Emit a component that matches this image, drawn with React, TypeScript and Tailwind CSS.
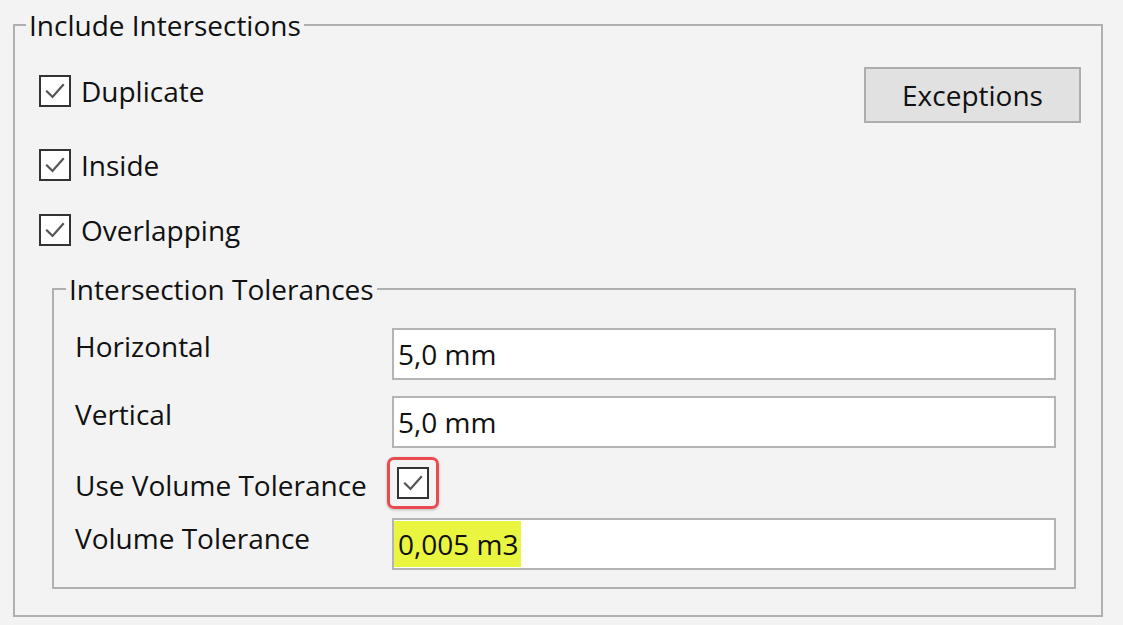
import React from 'react';

const font = { fontFamily: '"Open Sans", "Noto Sans", sans-serif' };

function CheckBox() {
  return (
    <span className="flex h-[32px] w-[32px] shrink-0 items-center justify-center border-2 border-[#333333] bg-white">
      <svg width="22" height="22" viewBox="0 0 22 22" fill="none">
        <path d="M3 11.5 L8.5 17 L19 5" stroke="#555555" strokeWidth="2.2" strokeLinecap="square" />
      </svg>
    </span>
  );
}

function CheckItem({ label, className }: { label: string; className?: string }) {
  return (
    <label className={'flex items-center gap-[10px] ' + (className ?? '')}>
      <CheckBox />
      <span className="leading-[34px]">{label}</span>
    </label>
  );
}

function TextBox({ value, highlight }: { value: string; highlight?: boolean }) {
  return (
    <div className="flex h-[52px] w-[664px] items-stretch border-2 border-[#b4b4b4] bg-white">
      <span
        className={
          'flex items-center pl-[4px] pr-[2px] ' + (highlight ? 'my-[1px] bg-[#eaf540]' : '')
        }
      >
        {value}
      </span>
    </div>
  );
}

export default function App() {
  return (
    <div
      className="h-[625px] w-[1123px] overflow-hidden bg-[#f3f3f3] pl-[13px] pt-[8px] text-[28px] text-[#111111]"
      style={font}
    >
      <fieldset className="h-[609px] w-[1090px] border-2 border-[#b0b0b0]">
        <legend className="ml-[11px] px-[3px] leading-[34px]">Include Intersections</legend>

        <div className="flex items-start justify-between pl-[24px] pr-[20px] pt-[25px]">
          <CheckItem label="Duplicate" className="mt-[7px]" />
          <button className="h-[56px] w-[217px] border-2 border-[#adadad] bg-[#e1e1e1] leading-[34px]">
            Exceptions
          </button>
        </div>
        <div className="pl-[24px]">
          <CheckItem label="Inside" className="mt-[25px]" />
          <CheckItem label="Overlapping" className="mt-[31px]" />
        </div>

        <fieldset className="ml-[37px] mt-[25px] h-[317px] w-[1024px] border-2 border-[#b0b0b0]">
          <legend className="ml-[12px] px-[3px] leading-[34px]">Intersection Tolerances</legend>

          <div className="grid grid-cols-[317px_664px] pl-[21px] pt-[22px]">
            <span className="pt-[1px] leading-[34px]">Horizontal</span>
            <TextBox value="5,0 mm" />

            <span className="mt-[16px] pt-[1px] leading-[34px]">Vertical</span>
            <div className="mt-[16px]">
              <TextBox value="5,0 mm" />
            </div>

            <span className="flex h-[70px] items-center pt-[4px] leading-[34px]">Use Volume Tolerance</span>
            <div className="flex h-[70px] items-center">
              <span className="-ml-[5px] rounded-[7px] border-[3px] border-[#e84a50] p-[7px] shadow-[0_1px_3px_rgba(0,0,0,0.25)]">
                <CheckBox />
              </span>
            </div>

            <span className="pt-[3px] leading-[34px]">Volume Tolerance</span>
            <TextBox value="0,005 m3" highlight />
          </div>
        </fieldset>
      </fieldset>
    </div>
  );
}
